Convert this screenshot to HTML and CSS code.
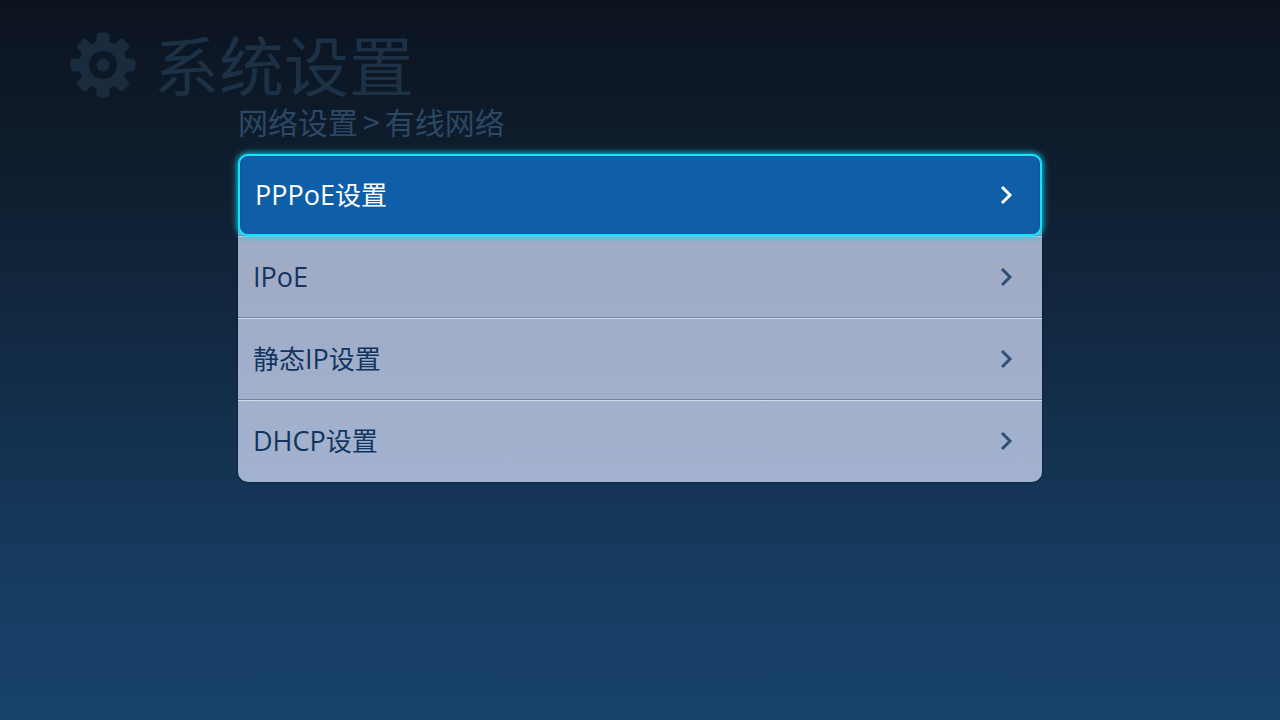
FILE: index.html
```html
<!DOCTYPE html>
<html lang="zh-CN">
<head>
<meta charset="utf-8">
<meta name="viewport" content="width=device-width, initial-scale=1">
<title>系统设置</title>
<link rel="stylesheet" href="styles.css">
</head>
<body>
<header class="header">
  <svg class="gear" viewBox="0 0 66 66" aria-hidden="true">
    <g class="gear-teeth">
      <rect x="30.5" y="4.5" width="5" height="57"/>
      <rect x="30.5" y="4.5" width="5" height="57" transform="rotate(45 33 33)"/>
      <rect x="30.5" y="4.5" width="5" height="57" transform="rotate(90 33 33)"/>
      <rect x="30.5" y="4.5" width="5" height="57" transform="rotate(135 33 33)"/>
    </g>
    <circle class="gear-body" cx="33" cy="33" r="24"/>
    <circle class="gear-hole" cx="33" cy="33" r="14"/>
    <circle class="gear-body" cx="33" cy="33" r="6.5"/>
  </svg>
  <h1 class="title">系统设置</h1>
</header>
<main class="content">
  <p class="breadcrumb">网络设置<span class="separator">&gt;</span>有线网络</p>
  <ul class="menu">
    <li class="menu-row"><button class="item item-selected" type="button"><span><span class="latin">PPPoE</span>设置</span><svg class="chevron" viewBox="0 0 14 20" aria-hidden="true"><path d="M3 2L11 10L3 18"/></svg></button></li>
    <li class="menu-row"><button class="item" type="button"><span class="latin">IPoE</span><svg class="chevron" viewBox="0 0 14 20" aria-hidden="true"><path d="M3 2L11 10L3 18"/></svg></button></li>
    <li class="menu-row"><button class="item" type="button"><span>静态<span class="latin">IP</span>设置</span><svg class="chevron" viewBox="0 0 14 20" aria-hidden="true"><path d="M3 2L11 10L3 18"/></svg></button></li>
    <li class="menu-row"><button class="item" type="button"><span><span class="latin">DHCP</span>设置</span><svg class="chevron" viewBox="0 0 14 20" aria-hidden="true"><path d="M3 2L11 10L3 18"/></svg></button></li>
  </ul>
</main>
</body>
</html>
```
FILE: styles.css
```css
* { box-sizing: border-box; }
body {
  margin: 0;
  min-height: 100vh;
  background: linear-gradient(#0c131f, #0f1e2f 25%, #122b46 50%, #163b5f 79%, #18426b);
  font-family: "Open Sans", "Noto Sans CJK SC", sans-serif;
}
.header {
  display: flex;
  align-items: flex-end;
  gap: 18px;
  padding: 28px 70px 0;
}
.gear { width: 66px; height: 66px; margin-bottom: 0; }
.gear-teeth { fill: #1a2b3e; stroke: #1a2b3e; stroke-width: 8; stroke-linejoin: round; }
.gear-body { fill: #1a2b3e; }
.gear-hole { fill: #0d1826; }
.title {
  margin: 0;
  font: 400 65px/70px "Noto Sans CJK SC", sans-serif;
  color: #1c3146;
}
.content { padding: 0 238px; }
.breadcrumb {
  margin: 0;
  padding: 4px 0 14px;
  font: 400 30px/38px "Noto Sans CJK SC", sans-serif;
  color: #2b4865;
}
.separator { margin: 0 5px; }
.menu {
  margin: 0;
  padding: 0;
  list-style: none;
  border-radius: 10px;
  background: linear-gradient(#9fa8c2, #a2b2ce);
  box-shadow: 0 0 2px #06122a;
}
.menu-row { height: 82px; }
.menu-row + .menu-row { border-top: 1px solid #d5dbe9; box-shadow: 0 -1px #72809c; }
.item {
  display: flex;
  align-items: center;
  justify-content: space-between;
  width: 100%;
  height: 100%;
  padding: 0 29px 2px 15px;
  border: 0;
  background: transparent;
  color: #12355f;
  font: inherit;
  font-size: 26px;
  line-height: 36px;
  cursor: pointer;
}
.latin { font-size: 27px; }
.item-selected {
  position: relative;
  border: 2px solid #14e2fd;
  border-radius: 10px;
  background: #0f5ea8;
  box-shadow: 0 0 6px 1px #14c8e6, inset 0 0 2px #0b3f80;
  color: #fff;
  padding: 0 27px 0 15px;
}
.chevron {
  width: 14px;
  height: 20px;
  fill: none;
  stroke: #2e4f77;
  stroke-width: 3;
}
.item-selected .chevron { stroke: #fff; }
```
